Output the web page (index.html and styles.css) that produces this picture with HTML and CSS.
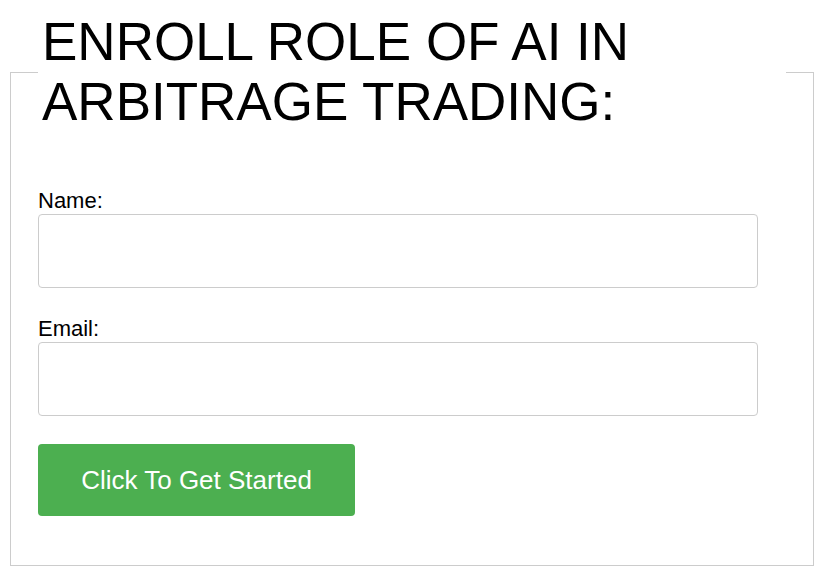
FILE: index.html
```html
<!DOCTYPE html>
<html lang="en">
<head>
    <meta charset="UTF-8">
    <meta name="viewport" content="width=device-width, initial-scale=1.0">
    <title>Enroll</title>
    <link rel="stylesheet" href="styles.css">
</head>
<body>
    <form class="enroll-form">
        <fieldset class="enroll-box">
            <legend class="enroll-title">ENROLL ROLE OF AI IN ARBITRAGE TRADING:</legend>
            <label for="name">Name:</label>
            <input type="text" id="name" name="name">
            <label for="email">Email:</label>
            <input type="email" id="email" name="email">
            <button type="submit" class="start-btn">Click To Get Started</button>
        </fieldset>
    </form>
</body>
</html>
```

FILE: styles.css
```css
body {
    margin: 8px;
    font-family: "Liberation Sans", Arial, sans-serif;
    color: #000;
    background: #fff;
}
.enroll-form {
    margin: 0;
}
.enroll-box {
    margin: 4px 0 0 2px;
    padding: 56px 27px 49px 27px;
    border: 1px solid #ccc;
}
.enroll-title {
    padding: 0 4px;
    font-size: 53px;
    line-height: 60px;
    font-weight: normal;
}
label {
    display: block;
    font-size: 22px;
    line-height: 25px;
    margin-bottom: 1px;
}
input[type="text"],
input[type="email"] {
    display: block;
    box-sizing: border-box;
    width: 720px;
    height: 74px;
    margin: 0 0 28px 0;
    padding: 12px 20px;
    border: 1px solid #ccc;
    border-radius: 4px;
    font-size: 16px;
}
.start-btn {
    display: block;
    width: 317px;
    height: 72px;
    padding: 0;
    border: none;
    border-radius: 4px;
    background-color: #4CAF50;
    color: #fff;
    font-family: "Liberation Sans", Arial, sans-serif;
    font-size: 26px;
    cursor: pointer;
}
```
